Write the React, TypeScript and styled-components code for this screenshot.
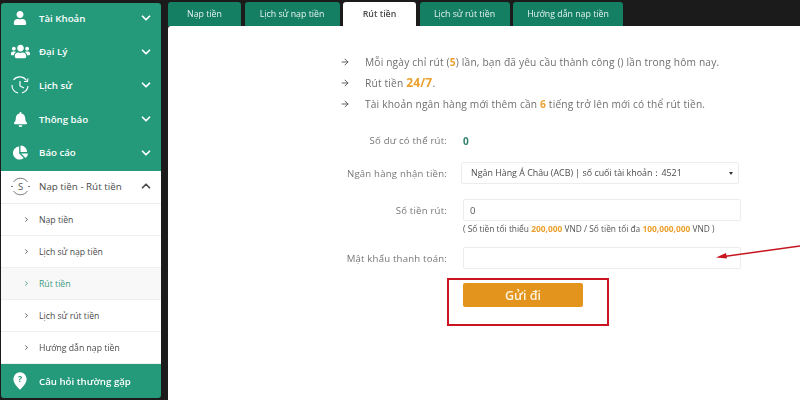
import React, { FC, ReactNode } from "react";
import styled, { createGlobalStyle } from "styled-components";
import { ChevronDown, ChevronUp, ChevronRight, ArrowRight } from "lucide-react";
import { FaUser, FaUsers, FaBell, FaChartPie } from "react-icons/fa";

const color = {
  page: "#1b1b1b",
  green: "#249a7b",
  tab: "#147f63",
  text: "#6f6f6f",
  dark: "#4a4a4a",
  orange: "#eba02e",
  button: "#e3941d",
  line: "#ececec",
  red: "#c8151f",
};

const GlobalStyle = createGlobalStyle`
  html, body {
    margin: 0;
    width: 800px;
    height: 400px;
    overflow: hidden;
    background: ${color.page};
    font-family: "Open Sans", "Liberation Sans", sans-serif;
  }
`;

const ClockIcon = () => (
  <svg width="20" height="20" viewBox="0 0 20 20" fill="none" stroke="#fff" strokeWidth="1.2">
    <path d="M3.500 5A8 8 0 0 1 16.500 5.500" />
    <path d="M18 11a8 8 0 0 1-6 6.800" />
    <path d="M8 18A8 8 0 0 1 2 10" />
    <path d="M10 6v5l4 2" />
    <path d="M14 6.500h3.500l.5-3" />
  </svg>
);

const MoneyIcon = () => (
  <svg width="21" height="21" viewBox="0 0 21 21" fill="none" stroke="#666" strokeWidth="0.9">
    <path d="M3.500 6a8.400 8.400 0 0 1 14 0M17.500 15a8.400 8.400 0 0 1-14 0" />
    <path d="M1 10.500h2M18 10.500h2" />
    <text x="10.500" y="14" fontSize="9.500" textAnchor="middle" fill="#555" stroke="none">
      S
    </text>
  </svg>
);

const PinIcon = () => (
  <svg width="14" height="18" viewBox="0 0 16 20">
    <path d="M8 0a7.600 7.600 0 0 1 7.600 7.600C15.600 12 11 17 8 20 5 17 .4 12 .4 7.600A7.600 7.600 0 0 1 8 0z" fill="#fff" />
    <text x="8" y="11.500" fontSize="10" fontWeight="700" textAnchor="middle" fill={color.green}>
      ?
    </text>
  </svg>
);

interface IMainItem {
  icon: ReactNode;
  label: string;
}

const mainItems: IMainItem[] = [
  { icon: <FaUser size={14} />, label: "Tài Khoản" },
  { icon: <FaUsers size={19} />, label: "Đại Lý" },
  { icon: <ClockIcon />, label: "Lịch sử" },
  { icon: <FaBell size={15} />, label: "Thông báo" },
  { icon: <FaChartPie size={15} />, label: "Báo cáo" },
];

const subItems = ["Nạp tiền", "Lịch sử nạp tiền", "Rút tiền", "Lịch sử rút tiền", "Hướng dẫn nạp tiền"];

const tabs = [
  { label: "Nạp tiền", width: 73 },
  { label: "Lịch sử nạp tiền", width: 95 },
  { label: "Rút tiền", width: 73 },
  { label: "Lịch sử rút tiền", width: 90 },
  { label: "Hướng dẫn nạp tiền", width: 110 },
];

const App: FC = () => {
  return (
    <Page>
      <GlobalStyle />
      <Sidebar>
        {mainItems.map((item) => (
          <MainRow key={item.label}>
            <IconSlot>{item.icon}</IconSlot>
            <RowLabel>{item.label}</RowLabel>
            <ChevronDown size={14} strokeWidth={3} />
          </MainRow>
        ))}
        <OpenRow>
          <IconSlot>
            <MoneyIcon />
          </IconSlot>
          <RowLabel>Nạp tiền - Rút tiền</RowLabel>
          <ChevronUp size={14} strokeWidth={3} />
        </OpenRow>
        {subItems.map((item) => (
          <SubRow key={item} $active={item === "Rút tiền"}>
            <ChevronRight size={7} strokeWidth={3} />
            {item}
          </SubRow>
        ))}
        <FaqRow>
          <IconSlot>
            <PinIcon />
          </IconSlot>
          <RowLabel>Câu hỏi thường gặp</RowLabel>
        </FaqRow>
      </Sidebar>

      <Content>
        <TabBar>
          {tabs.map((tab) => (
            <Tab key={tab.label} $width={tab.width} $active={tab.label === "Rút tiền"}>
              {tab.label}
            </Tab>
          ))}
        </TabBar>
        <Panel>
          <Notes>
            <Note>
              <ArrowRight size={10} />
              <span>
                Mỗi ngày chỉ rút (<Strong>5</Strong>) lần, bạn đã yêu cầu thành công () lần trong hôm nay.
              </span>
            </Note>
            <Note>
              <ArrowRight size={10} />
              <span>
                Rút tiền <BigStrong>24/7</BigStrong>.
              </span>
            </Note>
            <Note>
              <ArrowRight size={10} />
              <span>
                Tài khoản ngân hàng mới thêm cần <Strong>6</Strong> tiếng trở lên mới có thể rút tiền.
              </span>
            </Note>
          </Notes>

          <Form>
            <BalanceRow>
              <Label>Số dư có thể rút:</Label>
              <Balance>0</Balance>
            </BalanceRow>
            <SelectRow>
              <Label>Ngân hàng nhận tiền:</Label>
              <SelectBox>
                <span>Ngân Hàng Á Châu (ACB) | số cuối tài khoản：4521</span>
                <Caret />
              </SelectBox>
            </SelectRow>
            <AmountRow>
              <Label>Số tiền rút:</Label>
              <Field>0</Field>
            </AmountRow>
            <Hint>
              ( Số tiền tối thiểu <HintStrong>200,000</HintStrong> VND / Số tiền tối đa{" "}
              <HintStrong>100,000,000</HintStrong> VND )
            </Hint>
            <PasswordRow>
              <Label>Mật khẩu thanh toán:</Label>
              <Field />
            </PasswordRow>
            <SubmitRow>
              <SubmitButton>Gửi đi</SubmitButton>
            </SubmitRow>
          </Form>

          <RedFrame />
          <RedArrow viewBox="0 0 84 14" width="84" height="14">
            <path d="M84 1 8 11.500" stroke={color.red} strokeWidth="1.500" fill="none" />
            <path d="M0 12.500 10 8l1 5.500z" fill={color.red} />
          </RedArrow>
        </Panel>
      </Content>
    </Page>
  );
};

const Page = styled.div`
  position: relative;
  display: flex;
  width: 800px;
  height: 400px;
  overflow: hidden;
  filter: blur(0.35px);
`;

const Sidebar = styled.nav`
  flex: none;
  width: 160px;
  height: 395px;
  margin: 3px 7px 0 1px;
  border-radius: 3px;
  overflow: hidden;
  background: ${color.green};
`;

const MainRow = styled.div`
  display: flex;
  align-items: center;
  box-sizing: border-box;
  height: 33.600px;
  padding: 0 8px 3px 0;
  color: #fff;
  font-size: 9.700px;
  font-weight: 600;
`;

const OpenRow = styled(MainRow)`
  height: 33px;
  padding-bottom: 1px;
  background: #fff;
  color: ${color.dark};
  font-size: 9.800px;
  font-weight: 400;
  border-bottom: 1px solid ${color.line};
`;

const FaqRow = styled(MainRow)`
  height: 34px;
  padding: 1px 8px 0 0;
`;

const IconSlot = styled.div`
  flex: none;
  display: flex;
  justify-content: center;
  width: 38px;
`;

const RowLabel = styled.span`
  flex: 1;
`;

const SubRow = styled.div<{ $active?: boolean }>`
  display: flex;
  align-items: center;
  gap: 9px;
  box-sizing: border-box;
  height: 32px;
  padding: 1px 0 0 22px;
  background: ${(p) => (p.$active ? "#f8f8f8" : "#fff")};
  border-bottom: 1px solid #efefef;
  color: ${(p) => (p.$active ? "#3f9a82" : color.dark)};
  font-size: 8.700px;
`;

const Content = styled.main`
  flex: 1;
  display: flex;
  flex-direction: column;
  min-width: 0;
`;

const TabBar = styled.div`
  display: flex;
  gap: 3.500px;
  height: 24px;
  margin-top: 2px;
`;

const Tab = styled.div<{ $width: number; $active?: boolean }>`
  display: flex;
  align-items: center;
  justify-content: center;
  width: ${(p) => p.$width}px;
  border-radius: 3px 3px 0 0;
  background: ${(p) => (p.$active ? "#fff" : color.tab)};
  color: ${(p) => (p.$active ? color.dark : "#e8f4f0")};
  font-size: 8.800px;
  font-weight: ${(p) => (p.$active ? 600 : 400)};
`;

const Panel = styled.section`
  position: relative;
  flex: 1;
  padding: 25px 0 0 172px;
  border-top-left-radius: 3px;
  background: #fff;
`;

const Notes = styled.ul`
  margin: 0;
  padding: 0;
  list-style: none;
`;

const Note = styled.li`
  display: flex;
  align-items: center;
  gap: 15px;
  height: 21px;
  color: ${color.text};
  font-size: 10.200px;
  letter-spacing: 0.170px;

  svg {
    flex: none;
    color: #444;
  }
`;

const Strong = styled.b`
  color: ${color.orange};
`;

const BigStrong = styled(Strong)`
  font-size: 12px;
`;

const Form = styled.div`
  margin: 15px 0 0 -172px;
`;

const FormRow = styled.div`
  display: grid;
  grid-template-columns: 279px 278px;
  column-gap: 16px;
  align-items: center;
`;

const BalanceRow = styled(FormRow)`
  height: 23px;
`;

const SelectRow = styled(FormRow)`
  height: 22px;
  margin-top: 10px;
  column-gap: 14px;
`;

const AmountRow = styled(FormRow)`
  height: 22px;
  margin-top: 15px;
`;

const PasswordRow = styled(FormRow)`
  height: 22px;
  margin-top: 13px;
`;

const Label = styled.div`
  text-align: right;
  color: #777;
  font-size: 9.600px;
  letter-spacing: 0.200px;
`;

const Balance = styled.div`
  color: #2f7f6c;
  font-size: 10px;
  font-weight: 700;
`;

const SelectBox = styled.div`
  display: flex;
  align-items: center;
  justify-content: space-between;
  box-sizing: border-box;
  height: 22px;
  padding: 0 5px 0 9px;
  border: 1px solid ${color.line};
  border-radius: 2px;
  color: #4c4c4c;
  font-size: 8.900px;
`;

const Caret = styled.i`
  width: 0;
  height: 0;
  border-left: 2.500px solid transparent;
  border-right: 2.500px solid transparent;
  border-top: 3.500px solid #333;
`;

const Field = styled.div`
  display: flex;
  align-items: center;
  box-sizing: border-box;
  height: 22px;
  padding-left: 6px;
  border: 1px solid ${color.line};
  border-radius: 2px;
  color: #555;
  font-size: 9.500px;
`;

const Hint = styled.div`
  margin: 2px 0 0 295px;
  height: 11px;
  line-height: 11px;
  color: #555;
  font-size: 8.400px;
`;

const HintStrong = styled.b`
  color: ${color.orange};
`;

const SubmitRow = styled.div`
  margin: 14px 0 0 295px;
`;

const SubmitButton = styled.button`
  display: block;
  width: 120px;
  height: 24px;
  border: 0;
  border-radius: 2px;
  background: ${color.button};
  color: #fdf3df;
  font-family: inherit;
  font-size: 12.500px;
  font-weight: 600;
`;

const RedFrame = styled.div`
  position: absolute;
  left: 279px;
  top: 252px;
  box-sizing: border-box;
  width: 162px;
  height: 48px;
  border: 2px solid ${color.red};
`;

const RedArrow = styled.svg`
  position: absolute;
  left: 548px;
  top: 219px;
`;

export default App;
